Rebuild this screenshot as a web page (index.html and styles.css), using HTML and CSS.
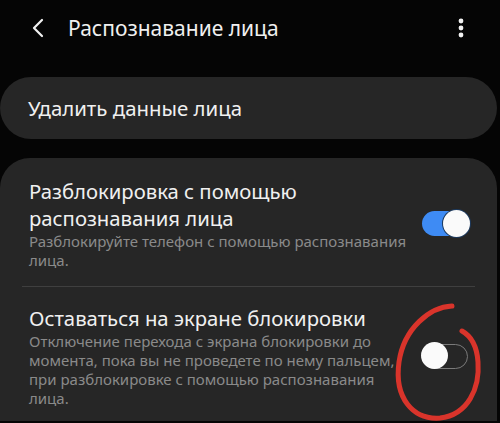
FILE: index.html
```html
<!DOCTYPE html>
<html lang="ru">
<head>
  <meta charset="UTF-8" />
  <meta name="viewport" content="width=device-width, initial-scale=1.0" />
  <title>Распознавание лица</title>
  <link rel="stylesheet" href="styles.css">
</head>
<body>
  <div class="header">
    <svg class="back" width="14" height="20" viewBox="0 0 14 20">
      <path d="M11 2 L3 10 L11 18" fill="none" stroke="#f2f2f2" stroke-width="2.2" stroke-linecap="round" stroke-linejoin="round"/>
    </svg>
    <h1>Распознавание лица</h1>
    <svg class="more" width="6" height="20" viewBox="0 0 6 20">
      <circle cx="3" cy="3" r="2.4" fill="#f2f2f2"/>
      <circle cx="3" cy="10" r="2.4" fill="#f2f2f2"/>
      <circle cx="3" cy="17" r="2.4" fill="#f2f2f2"/>
    </svg>
  </div>

  <div class="card single">
    <span>Удалить данные лица</span>
  </div>

  <div class="card list">
    <div class="item">
      <div class="text">
        <div class="title">Разблокировка с помощью распознавания лица</div>
        <div class="sub">Разблокируйте телефон с помощью распознавания лица.</div>
      </div>
      <div class="switch on"><span class="thumb"></span></div>
    </div>
    <div class="divider"></div>
    <div class="item">
      <div class="text">
        <div class="title">Оставаться на экране блокировки</div>
        <div class="sub">Отключение перехода с экрана блокировки до момента, пока вы не проведете по нему пальцем, при разблокировке с помощью распознавания лица.</div>
      </div>
      <div class="switch off"><span class="thumb"></span></div>
    </div>
  </div>

  <svg class="scribble" width="500" height="423" viewBox="0 0 500 423">
    <path d="M452 306 C 430 307, 404 328, 399 362 C 394 398, 413 420, 440 418 C 468 415, 480 388, 478 362 C 477 347, 471 336, 462 331" fill="none" stroke="#d9342b" stroke-width="5" stroke-linecap="round"/>
  </svg>
</body>
</html>
```

FILE: styles.css
```css
body {
  margin: 0;
  padding: 0;
  background: #050505;
  color: #f0f0f0;
  font-family: "Noto Sans", "Open Sans", sans-serif;
  height: 423px;
  overflow: hidden;
  position: relative;
}
.header {
  display: flex;
  align-items: center;
  height: 56px;
  padding: 0 36px 0 31px;
}
.header h1 {
  flex: 1;
  margin: 0 0 0 23px;
  font-size: 21px;
  font-weight: 400;
}
.card {
  background: #262626;
  margin: 0 3px 0 0;
  border-radius: 31px;
}
.single {
  display: flex;
  align-items: center;
  height: 62px;
  margin-top: 21px;
  padding-left: 28px;
  font-size: 20.4px;
}
.list {
  margin-top: 19px;
  border-radius: 30px 30px 0 0;
}
.item {
  display: flex;
  align-items: center;
  padding: 20px 29px 17px 29px;
}
.item + .divider + .item {
  padding-top: 18px;
  padding-bottom: 14px;
}
.text {
  flex: 1;
  margin-right: 12px;
}
.title {
  font-size: 20.3px;
  line-height: 27px;
}
.sub {
  font-size: 15px;
  line-height: 18.7px;
  color: #8a8a8a;
}
.divider {
  height: 1px;
  background: #3f3f3f;
  margin: 0 22px;
}
.switch {
  position: relative;
  width: 46px;
  height: 25px;
  border-radius: 13px;
  box-sizing: border-box;
}
.switch.on {
  background: #3e8bf4;
}
.switch.off {
  border: 1.5px solid #7a7a7a;
}
.thumb {
  position: absolute;
  top: -1px;
  width: 27px;
  height: 27px;
  border-radius: 50%;
  background: #fafafa;
}
.on .thumb {
  right: -2px;
  box-shadow: 0 0 0 1px #1d3a5e;
}
.off .thumb {
  left: -2px;
  top: -2.5px;
}
.scribble {
  position: absolute;
  top: 0;
  left: 0;
  pointer-events: none;
}
```
